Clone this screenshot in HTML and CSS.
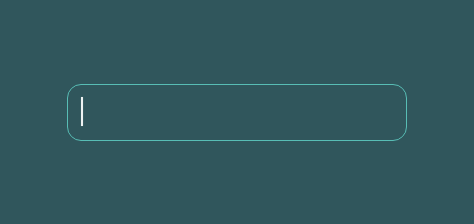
FILE: index.html
```html
<!DOCTYPE html>
<html>
    <head>
        <title>Input</title>
        <link rel="stylesheet" href="styles.css">
    </head>
    <body>
        <div id="stage">
            <div id="field" class="field">
                <span class="caret"></span>
            </div>
        </div>
    </body>
</html>
```

FILE: styles.css
```css
html, body{
    margin: 0;
    height: 100%;
}

body{
    background-color: #30565c;
    font-family: "Liberation Sans", Arial, sans-serif;
}

#stage{
    height: 100%;
    display: flex;
    align-items: center;
    justify-content: center;
}

.field{
    box-sizing: border-box;
    width: 340px;
    height: 57px;
    border: 1.5px solid #58bdb5;
    border-radius: 14px;
    padding: 0 13px;
    display: flex;
    align-items: center;
}

.caret{
    display: block;
    width: 2px;
    height: 29px;
    margin-top: -1px;
    background-color: #eef3f3;
    box-shadow: 0 0 1px rgba(200, 215, 215, 0.6);
}
```
